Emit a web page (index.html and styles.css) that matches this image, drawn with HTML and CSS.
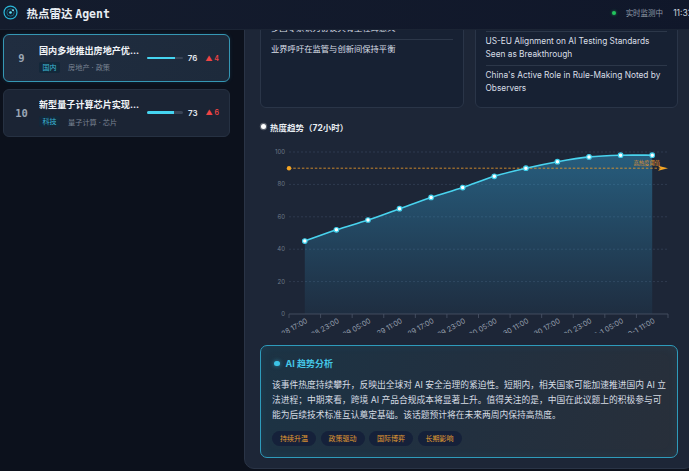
FILE: index.html
```html
<!DOCTYPE html>
<html lang="zh-CN">
<head>
<meta charset="utf-8">
<title>热点雷达 Agent</title>
<link rel="stylesheet" href="styles.css">
</head>
<body>
<div class="app">
  <header class="topbar">
    <div class="brand">
      <svg class="logo" viewBox="0 0 16 16" width="15" height="15">
        <circle cx="8" cy="8" r="6.9" fill="#0f2233" stroke="#2bb6d8" stroke-width="1.3"/>
        <circle cx="8" cy="8" r="3.9" fill="none" stroke="#2bb6d8" stroke-width="0.7" opacity="0.6"/>
        <circle cx="8" cy="8" r="1.4" fill="#5fe0f5"/>
        <circle cx="10.7" cy="5.5" r="0.9" fill="#9ff2ff"/>
      </svg>
      <span class="brand-name">热点雷达 <span class="brand-en">Agent</span></span>
    </div>
    <div class="status">
      <span class="live-dot"></span>
      <span class="live-text">实时监测中</span>
      <span class="clock">11:32:08</span>
    </div>
  </header>

  <div class="workspace">
    <aside class="sidebar">
      <div class="rank-item is-active">
        <div class="rank">9</div>
        <div class="info">
          <div class="item-title">国内多地推出房地产优...</div>
          <div class="meta"><span class="tag">国内</span><span class="cat">房地产 · 政策</span></div>
        </div>
        <div class="score">
          <div class="bar"><i style="width:76%"></i></div>
          <span class="num">76</span>
          <span class="delta">▲ 4</span>
        </div>
      </div>
      <div class="rank-item">
        <div class="rank">10</div>
        <div class="info">
          <div class="item-title">新型量子计算芯片实现...</div>
          <div class="meta"><span class="tag">科技</span><span class="cat">量子计算 · 芯片</span></div>
        </div>
        <div class="score">
          <div class="bar"><i style="width:73%"></i></div>
          <span class="num">73</span>
          <span class="delta">▲ 6</span>
        </div>
      </div>
    </aside>

    <main class="main">
      <section class="panel">
        <div class="news-grid">
          <div class="news-card">
            <h3 class="news-head">国内舆论</h3>
            <ul class="news-list">
              <li>监管部门表示将出台配套细则</li>
              <li>多国专家认为协议具有里程碑意义</li>
              <li>业界呼吁在监管与创新间保持平衡</li>
            </ul>
          </div>
          <div class="news-card">
            <h3 class="news-head">International Coverage</h3>
            <ul class="news-list">
              <li>Global Leaders Sign Landmark AI Safety Declaration in Geneva</li>
              <li>US-EU Alignment on AI Testing Standards Seen as Breakthrough</li>
              <li>China's Active Role in Rule-Making Noted by Observers</li>
            </ul>
          </div>
        </div>

        <div class="section-title"><span class="title-dot"></span>热度趋势（72小时）</div>
        <svg class="chart" viewBox="0 0 418 197" width="418" height="197">
          <defs>
            <linearGradient id="areaFill" x1="0" y1="0" x2="0" y2="1">
              <stop offset="0" stop-color="#38bdf8" stop-opacity="0.36"/>
              <stop offset="1" stop-color="#38bdf8" stop-opacity="0.05"/>
            </linearGradient>
          </defs>
          <g class="grid">
            <line x1="29" y1="16" x2="408" y2="16"/>
            <line x1="29" y1="48.4" x2="408" y2="48.4"/>
            <line x1="29" y1="80.8" x2="408" y2="80.8"/>
            <line x1="29" y1="113.2" x2="408" y2="113.2"/>
            <line x1="29" y1="145.6" x2="408" y2="145.6"/>
          </g>
          <g class="y-labels">
            <text x="25" y="18">100</text>
            <text x="25" y="50.4">80</text>
            <text x="25" y="82.8">60</text>
            <text x="25" y="115.2">40</text>
            <text x="25" y="147.6">20</text>
            <text x="25" y="180">0</text>
          </g>
          <path class="area" d="M44.8,105.1 C50.06,103.22 65.87,97.32 76.4,93.8 C86.93,90.28 97.47,87.52 108,84 C118.53,80.48 128.97,76.47 139.5,72.7 C150.03,68.93 160.57,64.92 171.1,61.4 C181.63,57.88 192.17,55.12 202.7,51.6 C213.23,48.08 223.77,43.53 234.3,40.3 C244.83,37.07 255.37,34.63 265.9,32.2 C276.43,29.77 286.87,27.58 297.4,25.7 C307.93,23.82 318.47,21.98 329,20.9 C339.53,19.82 350.07,19.48 360.6,19.2 C371.13,18.92 386.94,19.2 392.2,19.2 L392.2,178 L44.8,178 Z"/>
          <line class="axis" x1="29" y1="178" x2="408" y2="178"/>
          <g class="ticks">
            <line x1="29" y1="178" x2="29" y2="182"/>
            <line x1="60.58" y1="178" x2="60.58" y2="182"/>
            <line x1="92.17" y1="178" x2="92.17" y2="182"/>
            <line x1="123.75" y1="178" x2="123.75" y2="182"/>
            <line x1="155.33" y1="178" x2="155.33" y2="182"/>
            <line x1="186.92" y1="178" x2="186.92" y2="182"/>
            <line x1="218.5" y1="178" x2="218.5" y2="182"/>
            <line x1="250.08" y1="178" x2="250.08" y2="182"/>
            <line x1="281.67" y1="178" x2="281.67" y2="182"/>
            <line x1="313.25" y1="178" x2="313.25" y2="182"/>
            <line x1="344.83" y1="178" x2="344.83" y2="182"/>
            <line x1="376.42" y1="178" x2="376.42" y2="182"/>
            <line x1="408" y1="178" x2="408" y2="182"/>
          </g>
          <g class="x-labels">
            <text transform="translate(46.8,184) rotate(-30)">9-28 17:00</text>
            <text transform="translate(78.4,184) rotate(-30)">9-28 23:00</text>
            <text transform="translate(110,184) rotate(-30)">9-29 05:00</text>
            <text transform="translate(141.5,184) rotate(-30)">9-29 11:00</text>
            <text transform="translate(173.1,184) rotate(-30)">9-29 17:00</text>
            <text transform="translate(204.7,184) rotate(-30)">9-29 23:00</text>
            <text transform="translate(236.3,184) rotate(-30)">9-30 05:00</text>
            <text transform="translate(267.9,184) rotate(-30)">9-30 11:00</text>
            <text transform="translate(299.4,184) rotate(-30)">9-30 17:00</text>
            <text transform="translate(331,184) rotate(-30)">9-30 23:00</text>
            <text transform="translate(362.6,184) rotate(-30)">10-1 05:00</text>
            <text transform="translate(394.2,184) rotate(-30)">10-1 11:00</text>
          </g>
          <line class="threshold" x1="29" y1="32.2" x2="400" y2="32.2"/>
          <circle class="thr-dot" cx="29" cy="32.2" r="2.2"/>
          <path class="thr-arrow" d="M398,29.7 L408,32.2 L398,34.7 L400.5,32.2 Z"/>
          <text class="thr-label" x="400" y="29.4">高热度阈值</text>
          <path class="line" d="M44.8,105.1 C50.06,103.22 65.87,97.32 76.4,93.8 C86.93,90.28 97.47,87.52 108,84 C118.53,80.48 128.97,76.47 139.5,72.7 C150.03,68.93 160.57,64.92 171.1,61.4 C181.63,57.88 192.17,55.12 202.7,51.6 C213.23,48.08 223.77,43.53 234.3,40.3 C244.83,37.07 255.37,34.63 265.9,32.2 C276.43,29.77 286.87,27.58 297.4,25.7 C307.93,23.82 318.47,21.98 329,20.9 C339.53,19.82 350.07,19.48 360.6,19.2 C371.13,18.92 386.94,19.2 392.2,19.2"/>
          <g class="points">
            <circle cx="44.8" cy="105.1" r="2.3"/>
            <circle cx="76.4" cy="93.8" r="2.3"/>
            <circle cx="108" cy="84" r="2.3"/>
            <circle cx="139.5" cy="72.7" r="2.3"/>
            <circle cx="171.1" cy="61.4" r="2.3"/>
            <circle cx="202.7" cy="51.6" r="2.3"/>
            <circle cx="234.3" cy="40.3" r="2.3"/>
            <circle cx="265.9" cy="32.2" r="2.3"/>
            <circle cx="297.4" cy="25.7" r="2.3"/>
            <circle cx="329" cy="20.9" r="2.3"/>
            <circle cx="360.6" cy="19.2" r="2.3"/>
            <circle cx="392.2" cy="19.2" r="2.3"/>
          </g>
        </svg>

        <div class="insight">
          <div class="insight-title"><span class="insight-dot"></span>AI 趋势分析</div>
          <p class="insight-text">该事件热度持续攀升，反映出全球对 AI 安全治理的紧迫性。短期内，相关国家可能加速推进国内 AI 立法进程；中期来看，跨境 AI 产品合规成本将显著上升。值得关注的是，中国在此议题上的积极参与可能为后续技术标准互认奠定基础。该话题预计将在未来两周内保持高热度。</p>
          <div class="tags">
            <span>持续升温</span>
            <span>政策驱动</span>
            <span>国际博弈</span>
            <span>长期影响</span>
          </div>
        </div>
      </section>
    </main>
  </div>
</div>
</body>
</html>
```

FILE: styles.css
```css
* { box-sizing: border-box; }

html, body {
  margin: 0;
  padding: 0;
}

body {
  background: #0c111c;
  color: #e5eaf0;
  font-family: Inter, "Noto Sans CJK SC", sans-serif;
  overflow: hidden;
}

.app {
  width: 720px;
  height: 471px;
  display: flex;
  flex-direction: column;
}

/* ---------- top bar ---------- */
.topbar {
  height: 30px;
  flex: none;
  display: flex;
  align-items: center;
  justify-content: space-between;
  padding: 0 14px 4px 3px;
  background: linear-gradient(90deg, #141c2d, #10172a);
  border-bottom: 1px solid #1b2434;
}

.brand {
  display: flex;
  align-items: center;
  gap: 8.5px;
}

.logo { display: block; }

.brand-name {
  font-size: 11.5px;
  font-weight: 700;
  color: #e8edf3;
  white-space: nowrap;
}

.brand-en {
  font-family: "DejaVu Sans Mono", "Noto Sans CJK SC", monospace;
  font-weight: 600;
}

.status {
  display: flex;
  align-items: center;
  font-size: 7.5px;
  color: #8e98a6;
  white-space: nowrap;
}

.live-dot {
  width: 4px;
  height: 4px;
  border-radius: 50%;
  background: #22c55e;
  box-shadow: 0 0 3px rgba(34, 197, 94, 0.7);
  margin-right: 9.5px;
}

.clock {
  margin-left: 10px;
  font-size: 8.5px;
  color: #c9d1db;
}

/* ---------- workspace ---------- */
.workspace {
  flex: 1;
  min-height: 0;
  display: flex;
  gap: 11px;
}

.sidebar {
  width: 233px;
  flex: none;
  padding: 4px 3px;
  display: flex;
  flex-direction: column;
  gap: 6.5px;
}

.rank-item {
  height: 48px;
  display: flex;
  align-items: center;
  padding: 0 10px 0 8px;
  border: 1px solid #263142;
  border-radius: 6px;
  background: #1b2434;
}

.rank-item.is-active {
  border-color: #3597b4;
  background: linear-gradient(90deg, #202d40, #1d2a3b);
  box-shadow: 0 0 4px rgba(56, 189, 248, 0.12);
}

.rank {
  width: 19px;
  flex: none;
  margin-right: 8px;
  text-align: center;
  font-family: "DejaVu Sans Mono", monospace;
  font-weight: 700;
  font-size: 10.5px;
  color: #9ba6b4;
}

.info {
  flex: 1;
  min-width: 0;
  display: flex;
  flex-direction: column;
  gap: 5px;
}

.item-title {
  font-size: 9.1px;
  font-weight: 700;
  line-height: 13px;
  color: #f1f4f8;
  white-space: nowrap;
  overflow: hidden;
}

.meta {
  display: flex;
  align-items: center;
  gap: 8px;
  white-space: nowrap;
}

.tag {
  height: 11px;
  line-height: 11px;
  padding: 0 3.5px;
  font-size: 7px;
  border-radius: 2px;
  background: #13283a;
  color: #3db8d6;
}

.cat {
  font-size: 7.2px;
  color: #7b8594;
}

.score {
  flex: none;
  display: flex;
  align-items: center;
  margin-left: 8px;
}

.bar {
  width: 36px;
  height: 2.5px;
  border-radius: 2px;
  background: #3a4456;
  overflow: hidden;
}

.bar i {
  display: block;
  height: 100%;
  background: #45d4f0;
}

.num {
  margin-left: 4.5px;
  font-size: 8px;
  font-weight: 600;
  color: #e3e8ee;
}

.delta {
  margin-left: 8px;
  font-size: 7px;
  font-weight: 600;
  color: #ef4444;
}

/* ---------- main panel ---------- */
.main {
  flex: 1;
  min-width: 0;
  overflow: hidden;
}

.panel {
  width: 450px;
  margin-top: -73.5px;
  padding: 15px 15px 10px;
  background: #1d2637;
  border: 1px solid #2a3446;
  border-radius: 10px;
}

.news-grid {
  display: grid;
  grid-template-columns: 1fr 1fr;
  gap: 11px;
}

.news-card {
  background: #172133;
  border: 1px solid #2a3548;
  border-radius: 6px;
  padding: 6px 10px 8px;
}

.news-head {
  margin: 0 0 4px;
  font-size: 9px;
  line-height: 14px;
  font-weight: 700;
  color: #9fb0c4;
}

.news-list {
  list-style: none;
  margin: 0;
  padding: 0;
  font-size: 8.3px;
  line-height: 13px;
  color: #d9dfe7;
}

.news-list li {
  padding: 3.5px 0;
}

.news-list li + li {
  border-top: 1px solid #2c3749;
}

.section-title {
  margin-top: 13px;
  height: 12px;
  display: flex;
  align-items: center;
  font-size: 8.5px;
  font-weight: 700;
  color: #e8edf2;
}

.title-dot {
  width: 5px;
  height: 5px;
  border-radius: 50%;
  background: #ffffff;
  box-shadow: 0 0 0 1.2px rgba(255, 255, 255, 0.28);
  margin: 0 4px 0 1px;
}

/* ---------- chart ---------- */
.chart {
  display: block;
  margin-top: 3px;
  overflow: hidden;
  font-family: Inter, "Noto Sans CJK SC", sans-serif;
}

.chart .grid line {
  stroke: #334055;
  stroke-width: 0.8;
  stroke-dasharray: 2 2;
}

.chart .y-labels text {
  font-size: 6px;
  fill: #6e7988;
  text-anchor: end;
}

.chart .area { fill: url(#areaFill); }

.chart .axis,
.chart .ticks line {
  stroke: #4b5668;
  stroke-width: 0.8;
}

.chart .x-labels text {
  font-size: 7.2px;
  fill: #939dab;
  text-anchor: end;
  dominant-baseline: central;
}

.chart .threshold {
  stroke: #e8992a;
  stroke-width: 1;
  stroke-dasharray: 2.5 1.8;
  opacity: 0.85;
}

.chart .thr-dot { fill: #f5a524; }
.chart .thr-arrow { fill: #f5a524; }

.chart .thr-label {
  font-size: 5.3px;
  fill: #e0962e;
  text-anchor: end;
}

.chart .line {
  fill: none;
  stroke: #49d3ee;
  stroke-width: 1.6;
}

.chart .points circle {
  fill: #ffffff;
  stroke: #3fd0ec;
  stroke-width: 1.1;
}

/* ---------- insight ---------- */
.insight {
  margin-top: 12px;
  padding: 12px 9px 11px 11px;
  border: 1px solid #2e9bbb;
  border-radius: 7px;
  background: linear-gradient(110deg, #1c3344 0%, #213040 45%, #282f3a 100%);
  box-shadow: inset 0 0 12px rgba(56, 189, 248, 0.06);
}

.insight-title {
  height: 12px;
  display: flex;
  align-items: center;
  font-size: 9px;
  font-weight: 700;
  color: #44c6e6;
}

.insight-dot {
  width: 5.5px;
  height: 5.5px;
  border-radius: 50%;
  background: #3cc4e6;
  box-shadow: 0 0 4px rgba(60, 196, 230, 0.6);
  margin: 0 6px 0 2px;
}

.insight-text {
  margin: 8.5px 0 0;
  font-size: 8.75px;
  line-height: 15px;
  color: #d6dce4;
}

.tags {
  display: flex;
  gap: 4.5px;
  margin-top: 8px;
}

.tags span {
  height: 15px;
  line-height: 15px;
  padding: 0 8px;
  border-radius: 8px;
  background: #15213a;
  color: #e39b31;
  font-size: 7px;
}
```
